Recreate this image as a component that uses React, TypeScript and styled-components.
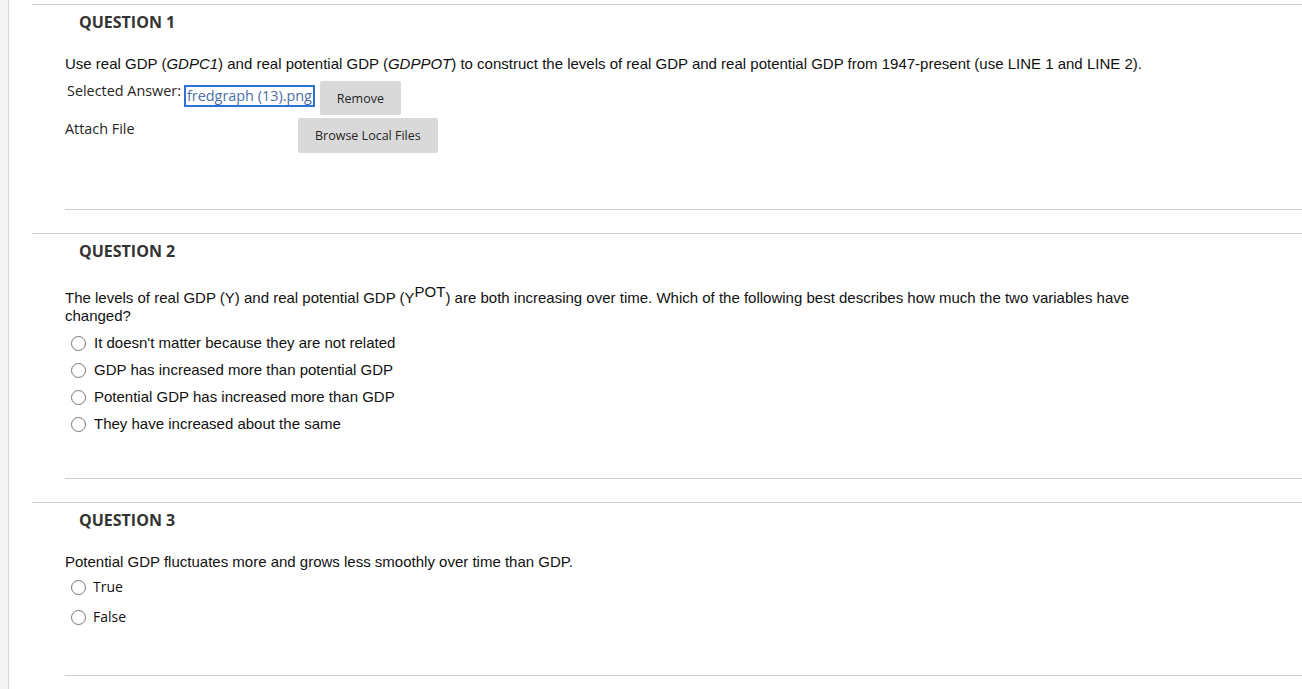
import React from "react";
import styled, { createGlobalStyle } from "styled-components";

const GlobalStyle = createGlobalStyle`
  html, body {
    margin: 0;
    padding: 0;
    background: #fff;
  }
  body {
    font-family: "Open Sans", "Liberation Sans", Arial, sans-serif;
    color: #262626;
  }
`;

const Page = styled.div`
  display: flex;
  min-height: 689px;
`;

const Rail = styled.div`
  width: 8px;
  flex-shrink: 0;
  background: #f4f4f4;
  border-right: 1px solid #d4d4d4;
`;

const Main = styled.div`
  flex: 1;
  padding-left: 23px;
  padding-top: 4px;
`;

const Block = styled.section`
  border-top: 1px solid #cdcdcd;
`;

const Heading = styled.h3`
  margin: 0;
  padding: 6px 0 0 47px;
  font-family: "Open Sans", sans-serif;
  font-size: 16px;
  font-weight: 700;
  line-height: 22px;
  color: #333;
`;

const Body = styled.div<{ $top: number }>`
  margin-left: 33px;
  padding-top: ${(p) => p.$top}px;
  border-bottom: 1px solid #cdcdcd;
`;

const Prompt = styled.p`
  margin: 0;
  font-family: "Liberation Sans", Arial, sans-serif;
  font-size: 15px;
  line-height: 18px;
  color: #111;
  padding-right: 150px;

  sup {
    font-size: 15px;
    line-height: 0;
    vertical-align: 6px;
  }
`;

const AnswerRow = styled.div`
  display: flex;
  align-items: flex-start;
  margin-top: 8px;
  padding-left: 2px;
`;

const Label = styled.span`
  font-family: "Open Sans", sans-serif;
  font-size: 14.4px;
  line-height: 20px;
  color: #262626;
`;

const FileLink = styled.a`
  margin: 4px 5px 0 3px;
  padding: 0 1px;
  border: 2px solid #2f72d6;
  font-family: "Open Sans", sans-serif;
  font-size: 14.4px;
  line-height: 18px;
  color: #4d6fa8;
  text-decoration: none;
`;

const Button = styled.button`
  background: #d9d9d9;
  border: none;
  border-radius: 2px;
  font-family: "Open Sans", sans-serif;
  font-size: 12.5px;
  color: #262626;
  padding: 0 17px;
  height: 34px;
`;

const AttachRow = styled.div`
  display: grid;
  grid-template-columns: 233px auto;
  align-items: start;
  margin-top: 3px;
  padding-bottom: 56px;
`;

const AttachLabel = styled(Label)`
  padding-top: 1px;
`;

const BrowseButton = styled(Button)`
  justify-self: start;
  height: 35px;
`;

const Options = styled.div<{ $gap: number; $font: "arial" | "open" }>`
  display: flex;
  flex-direction: column;
  gap: ${(p) => p.$gap}px;
  margin-top: ${(p) => (p.$font === "arial" ? 9 : 7)}px;
  padding-left: 6px;
  font-family: ${(p) =>
    p.$font === "arial"
      ? `"Liberation Sans", Arial, sans-serif`
      : `"Open Sans", sans-serif`};
  font-size: ${(p) => (p.$font === "arial" ? 15 : 14)}px;
  color: #111;
`;

const Option = styled.label<{ $textGap: number }>`
  display: flex;
  align-items: center;
  gap: ${(p) => p.$textGap}px;
  line-height: 18px;
`;

const Radio = styled.span`
  width: 13px;
  height: 13px;
  border-radius: 50%;
  border: 1px solid #767676;
  background: #fff;
  flex-shrink: 0;
`;

const Spacer = styled.div<{ $h: number }>`
  height: ${(p) => p.$h}px;
`;

const q2Options = [
  "It doesn't matter because they are not related",
  "GDP has increased more than potential GDP",
  "Potential GDP has increased more than GDP",
  "They have increased about the same",
];

const App: React.FC = () => {
  return (
    <>
      <GlobalStyle />
      <Page>
        <Rail />
        <Main>
          <Block>
            <Heading>QUESTION 1</Heading>
            <Body $top={22}>
              <Prompt>
                Use real GDP (<i>GDPC1</i>) and real potential GDP (<i>GDPPOT</i>) to
                construct the levels of real GDP and real potential GDP from
                1947-present (use LINE 1 and LINE 2).
              </Prompt>
              <AnswerRow>
                <Label>Selected Answer:</Label>
                <FileLink href="#">fredgraph (13).png</FileLink>
                <Button>Remove</Button>
              </AnswerRow>
              <AttachRow>
                <AttachLabel>Attach File</AttachLabel>
                <BrowseButton>Browse Local Files</BrowseButton>
              </AttachRow>
            </Body>
            <Spacer $h={23} />
          </Block>

          <Block>
            <Heading>QUESTION 2</Heading>
            <Body $top={27}>
              <Prompt>
                The levels of real GDP (Y) and real potential GDP (Y<sup>POT</sup>)
                are both increasing over time. Which of the following best
                describes how much the two variables have changed?
              </Prompt>
              <Options $gap={9} $font="arial">
                {q2Options.map((o) => (
                  <Option key={o} $textGap={8}>
                    <Radio />
                    {o}
                  </Option>
                ))}
              </Options>
              <Spacer $h={45} />
            </Body>
            <Spacer $h={23} />
          </Block>

          <Block>
            <Heading>QUESTION 3</Heading>
            <Body $top={22}>
              <Prompt>
                Potential GDP fluctuates more and grows less smoothly over time
                than GDP.
              </Prompt>
              <Options $gap={12} $font="open">
                <Option $textGap={7}>
                  <Radio />
                  True
                </Option>
                <Option $textGap={7}>
                  <Radio />
                  False
                </Option>
              </Options>
              <Spacer $h={49} />
            </Body>
          </Block>
        </Main>
      </Page>
    </>
  );
};

export default App;
